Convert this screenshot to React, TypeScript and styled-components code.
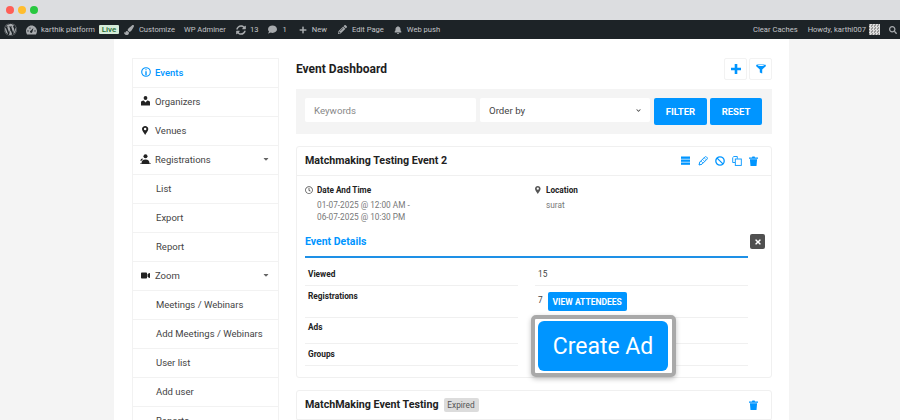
import React from "react";
import styled, { createGlobalStyle } from "styled-components";
import {
  FaWordpress, FaPaintBrush, FaSyncAlt, FaComment, FaPlus, FaPencilAlt, FaBell, FaSearch,
  FaVideo, FaCaretDown, FaTimes, FaRegClock, FaChevronDown,
} from "react-icons/fa";

const Global = createGlobalStyle`
  html, body { margin: 0; padding: 0; height: 420px; overflow: hidden; background: #f4f4f4; }
  body { font-family: Roboto, "Liberation Sans", sans-serif; }
  * { box-sizing: border-box; }
`;

const Shell = styled.div`width: 900px; height: 420px; overflow: hidden; display: flex; flex-direction: column;`;
const Chrome = styled.div`height: 20px; flex: none; background: #dcdde0; display: flex; align-items: center; gap: 4px; padding: 0 0 0 6px;`;
const Dot = styled.span<{ $c: string }>`width: 8px; height: 8px; border-radius: 50%; background: ${p => p.$c};`;
const AdminBar = styled.div`height: 19px; flex: none; background: #1d2327; color: #c3c4c7; display: flex; align-items: center; justify-content: space-between; font-size: 7.6px; padding: 0 3px 0 4px;`;
const BarGroup = styled.div`display: flex; align-items: center;`;
const BarItem = styled.span<{ $ml?: number; $gap?: number }>`display: inline-flex; align-items: center; gap: ${p => p.$gap ?? 4}px; margin-left: ${p => p.$ml ?? 0}px; white-space: nowrap;
  svg { color: #a7aaad; flex: none; }`;
const LiveTag = styled.span`background: #d5ecd9; color: #1f6b33; font-size: 8px; font-weight: 500; height: 9px; line-height: 9px; width: 20px; text-align: center; margin-left: 4px; border-radius: 1px;`;
const Avatar = styled.span`width: 11px; height: 11px; margin-left: 3px; background: repeating-conic-gradient(#ddd 0 25%, #999 0 50%) 0 0 / 3px 3px;`;

const Page = styled.div`width: 675px; margin-left: 114px; background: #fff; flex: 1; padding: 19px 17px 0 18px; display: flex; gap: 17px; overflow: hidden;`;
const Sidebar = styled.nav`width: 147px; flex: none; border: 1px solid #f2f2f2; border-bottom: none; align-self: flex-start;`;
const NavRow = styled.div<{ $active?: boolean; $sub?: boolean }>`height: 29px; display: flex; align-items: center; border-bottom: 1px solid #f2f2f2; padding: 0 8px 2px ${p => p.$sub ? 23 : 8}px; gap: 5px; font-size: 9.5px; color: ${p => p.$active ? "#0095ff" : "#444"}; font-weight: ${p => p.$active ? 500 : 400};
  svg { flex: none; }`;
const NavIcon = styled.span<{ $active?: boolean }>`width: 9px; display: inline-flex; justify-content: center; color: ${p => p.$active ? "#0095ff" : "#222"};`;
const Caret = styled.span`margin-left: auto; color: #666; display: inline-flex;`;

const Main = styled.main`width: 476px; flex: none;`;
const TitleRow = styled.div`height: 22px; display: flex; align-items: center; justify-content: space-between; margin-bottom: 9px;`;
const Title = styled.h1`margin: 0; font-size: 12px; font-weight: 700; color: #1e1e1e; padding-bottom: 1px;`;
const TitleActions = styled.div`display: flex; gap: 2px;`;
const SquareBtn = styled.button`width: 23px; height: 22px; background: #fff; border: 1px solid #f2f2f2; border-radius: 2px; color: #0095ff; padding: 0; display: flex; align-items: center; justify-content: center;`;
const FilterBar = styled.div`height: 45px; background: #f4f4f4; display: flex; align-items: flex-start; padding: 9px 10px 0 9px; gap: 3px; margin-bottom: 12px;`;
const Field = styled.div<{ $w: number; $c: string; $mx?: number }>`width: ${p => p.$w}px; height: 24px; background: #fff; border-radius: 2px; display: flex; align-items: center; justify-content: space-between; padding: 0 9px; font-size: 9.7px; color: ${p => p.$c}; margin: 0 ${p => p.$mx ?? 0}px;`;
const Blue = styled.button<{ $w: number }>`width: ${p => p.$w}px; height: 27px; background: #0095ff; border: none; border-radius: 2px; color: #fff; font: 700 9.5px Roboto, sans-serif; padding: 0;`;

const Card = styled.section`border: 1px solid #f0f0f0; border-radius: 3px; margin-bottom: 12px; background: #fff;`;
const CardHead = styled.header`height: 29px; display: flex; align-items: center; border-bottom: 1px solid #f0f0f0; padding: 0 13px 1px 8px;`;
const CardTitle = styled.h2`margin: 0; font-size: 10.7px; font-weight: 700; color: #222;`;
const Badge = styled.span`margin-left: 5px; background: #dcdcdc; color: #555; font-size: 8.3px; height: 14px; line-height: 14px; width: 35px; text-align: center; border-radius: 2px;`;
const HeadIcons = styled.div`margin-left: auto; display: flex; align-items: center; gap: 7px; color: #0095ff;`;
const CardBody = styled.div`padding: 9px 23px 0 8px; position: relative; height: 201px;`;
const InfoCols = styled.div`display: flex; height: 48px;`;
const InfoCol = styled.div<{ $w: number }>`width: ${p => p.$w}px; flex: none;`;
const InfoHead = styled.div`display: flex; align-items: center; gap: 4px; font-size: 8.2px; font-weight: 700; color: #222; height: 10px;`;
const InfoGlyph = styled.span`width: 8px; display: inline-flex; justify-content: center; color: #555; flex: none;`;
const InfoText = styled.div`margin: 5px 0 0 12px; font-size: 8.25px; line-height: 11.5px; color: #777;`;
const DetailsHead = styled.div`height: 25px; font-size: 10.5px; font-weight: 700; color: #0095ff; border-bottom: 2px solid #1e90e6; line-height: 17px;`;
const CloseBtn = styled.span`position: absolute; right: 6px; top: 58px; width: 15px; height: 15px; background: #505050; border-radius: 2px; color: #fff; display: flex; align-items: center; justify-content: center;`;
const DetailRows = styled.div`margin-top: 5px;`;
const DRow = styled.div<{ $h: number }>`height: ${p => p.$h}px; display: grid; grid-template-columns: 213px 213px; column-gap: 17px; font-size: 8.3px;`;
const DLabel = styled.div<{ $pt?: number }>`padding: ${p => p.$pt ?? 5}px 0 0 3px; font-weight: 700; color: #222; line-height: 11px; border-bottom: 1px solid #f0f0f0;`;
const DValue = styled.div<{ $pt?: number }>`display: flex; align-items: flex-start; gap: 5px; color: #444; padding: ${p => p.$pt ?? 5}px 0 0 3px; line-height: 11px; border-bottom: 1px solid #f0f0f0;`;
const ValueNum = styled.span`margin-top: 4px;`;
const Small = styled.button`height: 19px; background: #0095ff; border: none; border-radius: 2px; color: #fff; font: 700 8.5px Roboto, sans-serif; padding: 0; width: 79px; margin-top: 1px;`;
const Highlight = styled.div`position: absolute; left: 234px; top: 139px; width: 145px; height: 62px; border: 4px solid #a9a9a9; border-radius: 5px; background: #fff; padding: 2px 4px 2px 3px; box-shadow: 0 2px 5px rgba(0,0,0,.25);`;
const CreateAd = styled.div`width: 100%; height: 100%; background: #0095ff; border-radius: 6px; color: #fff; font-size: 23px; padding-top: 1px; display: flex; align-items: center; justify-content: center;`;

const GaugeIcon = () => (
  <svg width="11" height="10" viewBox="0 0 11 10" fill="currentColor"><path fillRule="evenodd" d="M5.500.5C8.500.5 11 3 11 6c0 1.300-.4 2.500-1 3.500H1C.4 8.500 0 7.300 0 6 0 3 2.500.5 5.500.5zM7.400 3L5 5.500a1.200 1.200 0 1 0 1.400 1.300zM2 5.200a.7.7 0 1 0 0 1.400.7.7 0 0 0 0-1.400zm7 0a.7.7 0 1 0 0 1.400.7.7 0 0 0 0-1.400zM4 2.400a.7.7 0 1 0 0 1.400.7.7 0 0 0 0-1.400z" /></svg>
);
const BarsIcon = () => (
  <svg width="10" height="9" viewBox="0 0 10 9" fill="currentColor"><rect y="0.500" width="9" height="2.300" /><rect y="3.500" width="9" height="2.300" /><rect y="6.500" width="9" height="2.300" /></svg>
);
const PencilIcon = () => (
  <svg width="10" height="10" viewBox="0 0 10 10" fill="none" stroke="currentColor" strokeWidth="1"><path d="M1 9l.8-3L6.800 1c.5-.5 1.200-.5 1.700 0l.5.5c.5.5.5 1.200 0 1.700L4 8.200z" /><path d="M3 5l2 2M4.600 3.400l2 2M6.200 1.800l2 2" strokeWidth=".7" /></svg>
);
const BanIcon = () => (
  <svg width="10" height="10" viewBox="0 0 10 10" fill="none" stroke="currentColor" strokeWidth="1.300"><circle cx="5" cy="5" r="4.200" /><path d="M2.100 2.100l5.800 5.800" /></svg>
);
const CopyIcon = () => (
  <svg width="10" height="10" viewBox="0 0 10 10" fill="none" stroke="currentColor" strokeWidth=".9"><path d="M3 6.500H.7V1.600L1.800.5h3.500v2.200" /><rect x="3.300" y="3" width="6" height="6.400" fill="#fff" /></svg>
);
const TrashIcon = () => (
  <svg width="9" height="10" viewBox="0 0 9 10" fill="currentColor"><path d="M0 1.500h3L3.400.5h2.200l.4 1h3v1.200H0zM.9 3.200h7.200l-.6 6.800h-6z" /></svg>
);
const PlusIcon = () => (
  <svg width="10" height="10" viewBox="0 0 10 10" fill="currentColor"><path d="M3.700 0h2.600v3.700H10v2.600H6.300V10H3.700V6.300H0V3.700h3.700z" /></svg>
);
const FunnelIcon = () => (
  <svg width="10" height="10" viewBox="0 0 10 10" fill="currentColor"><path d="M.2 1c0-.6 9.600-.6 9.600 0v1.300L6.200 5.600v4L3.800 8.600v-3L.2 2.300z" /><ellipse cx="5" cy="1.500" rx="3.300" ry=".5" fill="#fff" /></svg>
);
const InfoIcon = () => (
  <svg width="10" height="10" viewBox="0 0 10 10" fill="none" stroke="currentColor"><circle cx="5" cy="5" r="4.300" strokeWidth="1.100" /><path d="M5 4.200v4" strokeWidth="1.400" /><path d="M5 2.200v1" strokeWidth="1.200" /></svg>
);
const OrganizerIcon = () => (
  <svg width="9" height="10" viewBox="0 0 9 10" fill="currentColor"><circle cx="4.500" cy="2" r="1.900" /><path d="M0 9.500V6.200C0 5 1.200 4.700 2.800 4.400L4.500 6.500l1.700-2.100C7.800 4.700 9 5 9 6.200v3.300z" /></svg>
);
const PinIcon = ({ h = 10 }: { h?: number }) => (
  <svg width={h * 0.7} height={h} viewBox="0 0 7 10" fill="currentColor"><path fillRule="evenodd" d="M3.500 0C5.400 0 7 1.500 7 3.400 7 5.300 4.500 8.300 3.500 10 2.500 8.300 0 5.300 0 3.400 0 1.500 1.600 0 3.500 0zm0 2a1.400 1.400 0 1 0 0 2.800 1.400 1.400 0 0 0 0-2.800z" /></svg>
);
const GroupIcon = () => (
  <svg width="11" height="10" viewBox="0 0 11 10" fill="currentColor"><circle cx="5.500" cy="2.200" r="2" /><path d="M1.500 9.500c0-2.300 1.200-3.900 4-3.900s4 1.600 4 3.900zM0 9.500h11v.5H0z" /><path d="M.5 7c0-1.500.7-2.300 2-2.600l.6.800C2 5.600 1.600 6.200 1.400 7z" /></svg>
);

export default function App() {
  return (
    <Shell>
      <Global />
      <Chrome><Dot $c="#ff5f57" /><Dot $c="#ffbd2e" /><Dot $c="#28c840" /></Chrome>
      <AdminBar>
        <BarGroup>
          <BarItem><FaWordpress size={13} /></BarItem>
          <BarItem $ml={9}><GaugeIcon />karthik platform</BarItem>
          <LiveTag>Live</LiveTag>
          <BarItem $ml={5} $gap={5}><FaPaintBrush size={10} />Customize</BarItem>
          <BarItem $ml={9}>WP Adminer</BarItem>
          <BarItem $ml={10}><FaSyncAlt size={10} />13</BarItem>
          <BarItem $ml={10} $gap={5}><FaComment size={9} />1</BarItem>
          <BarItem $ml={12} $gap={5}><FaPlus size={8} />New</BarItem>
          <BarItem $ml={11} $gap={5}><FaPencilAlt size={9} />Edit Page</BarItem>
          <BarItem $ml={10} $gap={5}><FaBell size={8} />Web push</BarItem>
        </BarGroup>
        <BarGroup>
          <BarItem>Clear Caches</BarItem>
          <BarItem $ml={10}>Howdy, karthi007</BarItem>
          <Avatar />
          <BarItem $ml={9}><FaSearch size={8} /></BarItem>
        </BarGroup>
      </AdminBar>
      <Page>
        <Sidebar>
          <NavRow $active><NavIcon $active><InfoIcon /></NavIcon>Events</NavRow>
          <NavRow><NavIcon><OrganizerIcon /></NavIcon>Organizers</NavRow>
          <NavRow><NavIcon><PinIcon h={9} /></NavIcon>Venues</NavRow>
          <NavRow><NavIcon><GroupIcon /></NavIcon>Registrations<Caret><FaCaretDown size={8} /></Caret></NavRow>
          <NavRow $sub>List</NavRow>
          <NavRow $sub>Export</NavRow>
          <NavRow $sub>Report</NavRow>
          <NavRow><NavIcon><FaVideo size={9} /></NavIcon>Zoom<Caret><FaCaretDown size={8} /></Caret></NavRow>
          <NavRow $sub>Meetings / Webinars</NavRow>
          <NavRow $sub>Add Meetings / Webinars</NavRow>
          <NavRow $sub>User list</NavRow>
          <NavRow $sub>Add user</NavRow>
          <NavRow $sub>Reports</NavRow>
        </Sidebar>
        <Main>
          <TitleRow>
            <Title>Event Dashboard</Title>
            <TitleActions>
              <SquareBtn><PlusIcon /></SquareBtn>
              <SquareBtn><FunnelIcon /></SquareBtn>
            </TitleActions>
          </TitleRow>
          <FilterBar>
            <Field $w={171} $c="#888">Keywords</Field>
            <Field $w={170} $c="#444" $mx={1}>Order by<FaChevronDown size={5} /></Field>
            <Blue $w={53}>FILTER</Blue>
            <Blue $w={52}>RESET</Blue>
          </FilterBar>
          <Card>
            <CardHead>
              <CardTitle>Matchmaking Testing Event 2</CardTitle>
              <HeadIcons>
                <BarsIcon /><PencilIcon /><BanIcon /><CopyIcon /><TrashIcon />
              </HeadIcons>
            </CardHead>
            <CardBody>
              <InfoCols>
                <InfoCol $w={229}>
                  <InfoHead><InfoGlyph><FaRegClock size={8} /></InfoGlyph>Date And Time</InfoHead>
                  <InfoText>01-07-2025 @ 12:00 AM -<br />06-07-2025 @ 10:30 PM</InfoText>
                </InfoCol>
                <InfoCol $w={200}>
                  <InfoHead><InfoGlyph><PinIcon h={8} /></InfoGlyph>Location</InfoHead>
                  <InfoText>surat</InfoText>
                </InfoCol>
              </InfoCols>
              <DetailsHead>Event Details</DetailsHead>
              <CloseBtn><FaTimes size={8} /></CloseBtn>
              <DetailRows>
                <DRow $h={23}><DLabel $pt={6}>Viewed</DLabel><DValue $pt={6}>15</DValue></DRow>
                <DRow $h={32}><DLabel>Registrations</DLabel><DValue><ValueNum>7</ValueNum><Small>VIEW ATTENDEES</Small></DValue></DRow>
                <DRow $h={26}><DLabel $pt={4}>Ads</DLabel><DValue /></DRow>
                <DRow $h={22}><DLabel>Groups</DLabel><DValue /></DRow>
              </DetailRows>
              <Highlight><CreateAd>Create Ad</CreateAd></Highlight>
            </CardBody>
          </Card>
          <Card>
            <CardHead>
              <CardTitle>MatchMaking Event Testing</CardTitle>
              <Badge>Expired</Badge>
              <HeadIcons><TrashIcon /></HeadIcons>
            </CardHead>
          </Card>
        </Main>
      </Page>
    </Shell>
  );
}
